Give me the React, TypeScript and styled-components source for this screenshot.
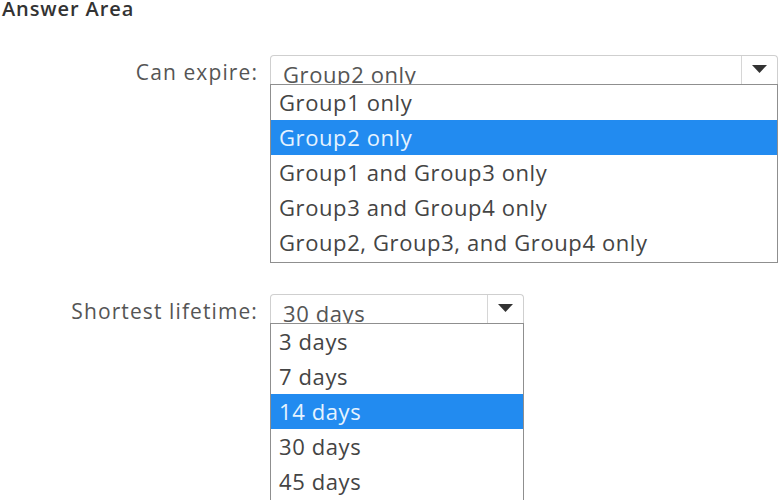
import React from "react";
import styled, { createGlobalStyle } from "styled-components";

const Global = createGlobalStyle`
  html, body { margin: 0; padding: 0; background: #fff; }
  body { font-family: "Open Sans", "Noto Sans", sans-serif; }
`;

const Page = styled.div`
  width: 780px;
  height: 500px;
  overflow: hidden;
  position: relative;
  background: #fff;
`;

const Title = styled.div`
  font-size: 20px;
  font-weight: 600;
  line-height: 24px;
  margin-top: -3px;
  height: 22px;
  color: #333;
  padding: 0 0 0 2px;
  letter-spacing: 0.9px;
`;

const Form = styled.div`
  display: grid;
  grid-template-columns: 258px auto;
  column-gap: 12px;
  row-gap: 31px;
  margin-top: 36px;
  align-items: start;
`;

const Label = styled.div`
  text-align: right;
  font-size: 21px;
  line-height: 29px;
  padding-top: 3px;
  color: #555;
  letter-spacing: 1.1px;
  white-space: nowrap;
`;

const Select = styled.div<{ $w: number }>`
  width: ${(p) => p.$w}px;
  display: flex;
  flex-direction: column;
`;

const Header = styled.div`
  height: 28px;
  border: 1px solid #cfcfcf;
  border-bottom: none;
  border-radius: 4px 4px 0 0;
  display: flex;
  overflow: hidden;
`;

const HeaderText = styled.div`
  flex: 1;
  padding-left: 12px;
  font-size: 22px;
  line-height: 36px;
  color: #555;
  letter-spacing: 0.6px;
  white-space: nowrap;
`;

const Arrow = styled.div`
  width: 36px;
  border-left: 1px solid #d6d6d6;
  display: flex;
  justify-content: center;
  padding-top: 9px;
  box-sizing: border-box;
`;

const List = styled.div`
  border: 1px solid #8f8f8f;
  padding-bottom: 2px;
`;

const Option = styled.div<{ $sel?: boolean }>`
  height: 35px;
  padding-left: 8px;
  font-size: 22px;
  line-height: 35px;
  letter-spacing: 0.6px;
  white-space: nowrap;
  color: ${(p) => (p.$sel ? "#e6f3ff" : "#444")};
  background: ${(p) => (p.$sel ? "#228bf0" : "transparent")};
`;

const Tri = () => (
  <svg width="15" height="8" viewBox="0 0 15 8">
    <path d="M0 0 H15 L7.5 8 Z" fill="#333" />
  </svg>
);

type Field = { label: string; value: string; width: number; options: string[]; selected: number };

const fields: Field[] = [
  {
    label: "Can expire:",
    value: "Group2 only",
    width: 508,
    options: [
      "Group1 only",
      "Group2 only",
      "Group1 and Group3 only",
      "Group3 and Group4 only",
      "Group2, Group3, and Group4 only",
    ],
    selected: 1,
  },
  {
    label: "Shortest lifetime:",
    value: "30 days",
    width: 254,
    options: ["3 days", "7 days", "14 days", "30 days", "45 days"],
    selected: 2,
  },
];

export default function App() {
  return (
    <Page>
      <Global />
      <Title>Answer Area</Title>
      <Form>
        {fields.map((f) => (
          <React.Fragment key={f.label}>
            <Label>{f.label}</Label>
            <Select $w={f.width}>
              <Header>
                <HeaderText>{f.value}</HeaderText>
                <Arrow>
                  <Tri />
                </Arrow>
              </Header>
              <List>
                {f.options.map((o, i) => (
                  <Option key={o} $sel={i === f.selected}>
                    {o}
                  </Option>
                ))}
              </List>
            </Select>
          </React.Fragment>
        ))}
      </Form>
    </Page>
  );
}
